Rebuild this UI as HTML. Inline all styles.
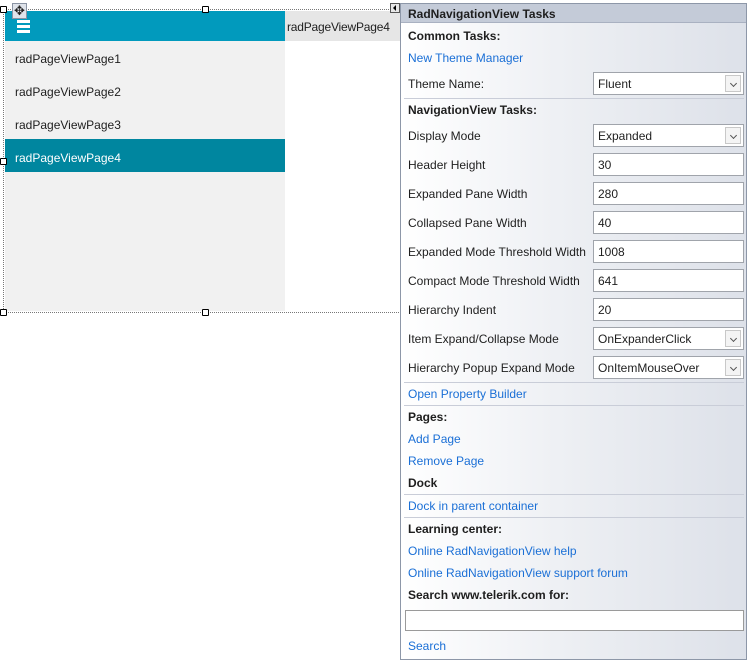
<!DOCTYPE html>
<html><head><meta charset="utf-8"><style>
*{margin:0;padding:0;box-sizing:border-box}
body{width:752px;height:664px;background:#fff;position:relative;overflow:hidden;font-family:"Liberation Sans",sans-serif;font-size:12px;color:#1e1e1e}
.a{position:absolute;white-space:nowrap}
.t{transform:translateY(1px)}
.h{width:7px;height:7px;border:1px solid #000;background:#fff;position:absolute;border-radius:1px}
.lbl{position:absolute;left:408px;line-height:14px;transform:translateY(1px);white-space:nowrap}
.b{font-weight:bold}
.lnk{color:#1a6fd6}
.box{position:absolute;left:593px;width:151px;height:23px;background:#fff;border:1px solid #a0a4ab;padding:4px 0 0 4px;line-height:14px}
.dd{position:absolute;right:2px;top:2px;width:16px;height:17px;background:#f4f4f4;border:1px solid #c8c8c8}
.dd:after{content:"";position:absolute;left:5px;top:5px;width:4px;height:4px;border-right:1px solid #555;border-bottom:1px solid #555;transform:rotate(45deg)}
.sep{position:absolute;left:404px;width:340px;height:1px;background:#c9cdd8}
</style></head><body>
<div class="a" style="left:3px;top:9px;width:398px;height:304px;border:1px dotted #777"></div>
<div class="a" style="left:5px;top:11px;width:280px;height:30px;background:#019abd"></div>
<div class="a" style="left:17px;top:20px;width:13px;height:3px;background:#fff"></div>
<div class="a" style="left:17px;top:25px;width:13px;height:3px;background:#fff"></div>
<div class="a" style="left:17px;top:30px;width:13px;height:3px;background:#fff"></div>
<div class="a" style="left:285px;top:11px;width:115px;height:30px;background:#e6e6e6"></div>
<div class="a t" style="left:287px;top:19px;letter-spacing:-0.2px">radPageViewPage4</div>
<div class="a" style="left:5px;top:41px;width:280px;height:270px;background:#f1f1f1"></div>
<div class="a t" style="left:15px;top:51px">radPageViewPage1</div>
<div class="a t" style="left:15px;top:84px">radPageViewPage2</div>
<div class="a t" style="left:15px;top:117px">radPageViewPage3</div>
<div class="a" style="left:5px;top:139px;width:280px;height:33px;background:#00869f"></div>
<div class="a t" style="left:15px;top:150px;color:#fff">radPageViewPage4</div>
<div class="h" style="left:0;top:6px"></div>
<div class="h" style="left:202px;top:6px"></div>
<div class="h" style="left:0;top:158px"></div>
<div class="h" style="left:0;top:309px"></div>
<div class="h" style="left:202px;top:309px"></div>
<div class="a" style="left:12px;top:3px;width:15px;height:16px;background:#dfe3ea;border:1px solid #8a93a3;text-align:center;line-height:14px;font-size:13px;color:#222">✥</div>
<div class="a" style="left:390px;top:3px;width:10px;height:10px;background:#e8e8e8;border:1px solid #555"></div>
<div class="a" style="left:393px;top:5px;width:0;height:0;border-top:3px solid transparent;border-bottom:3px solid transparent;border-right:3px solid #000"></div>
<div class="a" style="left:400px;top:3px;width:347px;height:657px;border:1px solid #8d97a8;background:linear-gradient(90deg,#ffffff 0%,#eef0f4 45%,#dde1e9 100%)"></div>
<div class="a" style="left:401px;top:4px;width:345px;height:19px;background:#c4cbd8;border-bottom:1px solid #a9b1c1"></div>
<div class="lbl b" style="top:6px">RadNavigationView Tasks</div>
<div class="lbl b" style="top:28px">Common Tasks:</div>
<div class="lbl lnk" style="top:50px">New Theme Manager</div>
<div class="lbl" style="top:76px">Theme Name:</div>
<div class="box" style="top:72px">Fluent<div class="dd"></div></div>
<div class="sep" style="top:98px"></div>
<div class="lbl b" style="top:102px">NavigationView Tasks:</div>
<div class="lbl" style="top:128px">Display Mode</div>
<div class="box" style="top:124px">Expanded<div class="dd"></div></div>
<div class="lbl" style="top:157px">Header Height</div>
<div class="box" style="top:153px">30</div>
<div class="lbl" style="top:186px">Expanded Pane Width</div>
<div class="box" style="top:182px">280</div>
<div class="lbl" style="top:215px">Collapsed Pane Width</div>
<div class="box" style="top:211px">40</div>
<div class="lbl" style="top:244px">Expanded Mode Threshold Width</div>
<div class="box" style="top:240px">1008</div>
<div class="lbl" style="top:273px">Compact Mode Threshold Width</div>
<div class="box" style="top:269px">641</div>
<div class="lbl" style="top:302px">Hierarchy Indent</div>
<div class="box" style="top:298px">20</div>
<div class="lbl" style="top:331px">Item Expand/Collapse Mode</div>
<div class="box" style="top:327px">OnExpanderClick<div class="dd"></div></div>
<div class="lbl" style="top:360px">Hierarchy Popup Expand Mode</div>
<div class="box" style="top:356px">OnItemMouseOver<div class="dd"></div></div>
<div class="sep" style="top:382px"></div>
<div class="lbl lnk" style="top:386px">Open Property Builder</div>
<div class="sep" style="top:405px"></div>
<div class="lbl b" style="top:409px">Pages:</div>
<div class="lbl lnk" style="top:431px">Add Page</div>
<div class="lbl lnk" style="top:453px">Remove Page</div>
<div class="lbl b" style="top:475px">Dock</div>
<div class="sep" style="top:494px"></div>
<div class="lbl lnk" style="top:498px">Dock in parent container</div>
<div class="sep" style="top:517px"></div>
<div class="lbl b" style="top:521px">Learning center:</div>
<div class="lbl lnk" style="top:543px">Online RadNavigationView help</div>
<div class="lbl lnk" style="top:565px">Online RadNavigationView support forum</div>
<div class="lbl b" style="top:587px">Search www.telerik.com for:</div>
<div class="a" style="left:405px;top:610px;width:339px;height:21px;background:#fff;border:1px solid #9a9a9a"></div>
<div class="lbl lnk" style="top:638px">Search</div>
</body></html>
